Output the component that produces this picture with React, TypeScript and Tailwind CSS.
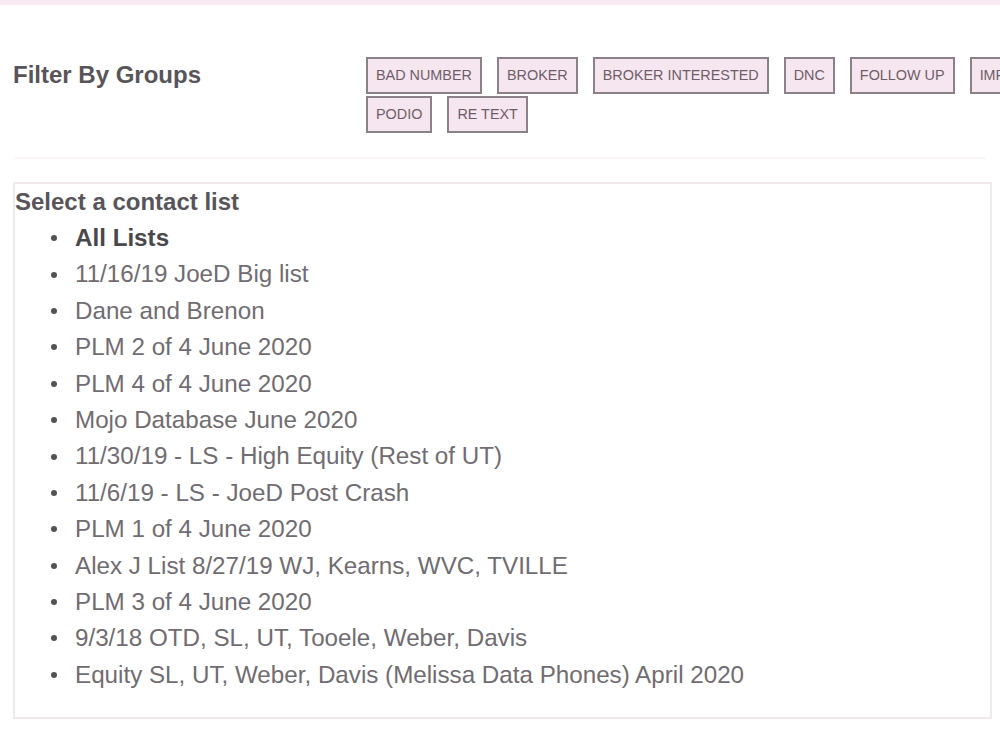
import React from "react";

const groups: string[] = [
  "BAD NUMBER",
  "BROKER",
  "BROKER INTERESTED",
  "DNC",
  "FOLLOW UP",
  "IMPORTANT",
  "PODIO",
  "RE TEXT",
];

const lists: string[] = [
  "11/16/19 JoeD Big list",
  "Dane and Brenon",
  "PLM 2 of 4 June 2020",
  "PLM 4 of 4 June 2020",
  "Mojo Database June 2020",
  "11/30/19 - LS - High Equity (Rest of UT)",
  "11/6/19 - LS - JoeD Post Crash",
  "PLM 1 of 4 June 2020",
  "Alex J List 8/27/19 WJ, Kearns, WVC, TVILLE",
  "PLM 3 of 4 June 2020",
  "9/3/18 OTD, SL, UT, Tooele, Weber, Davis",
  "Equity SL, UT, Weber, Davis (Melissa Data Phones) April 2020",
];

function ListRow({ label, bold }: { label: string; bold?: boolean }) {
  return (
    <li className="flex items-center h-[36.4px]">
      <span className="ml-[36px] w-[6px] h-[6px] rounded-full bg-[#555055]"></span>
      <span
        className={
          bold
            ? "ml-[18px] font-bold text-[#4a474b] whitespace-nowrap"
            : "ml-[18px] text-[#716c72] whitespace-nowrap"
        }
      >
        {label}
      </span>
    </li>
  );
}

export default function App() {
  return (
    <div
      className="w-[1000px] h-[750px] overflow-hidden bg-white"
      style={{ fontFamily: '"Liberation Sans", Arial, sans-serif' }}
    >
      <div className="h-[5px] bg-[#f8ebf3]"></div>

      <div className="flex pt-[52px] pb-[24px] mx-[15px] border-b-2 border-[#fbf3f8]">
        <div className="w-[353px] shrink-0 h-[35px] flex items-center -ml-[2px]">
          <h2 className="text-[24px] font-bold text-[#58545a] leading-none">Filter By Groups</h2>
        </div>
        <div className="w-[740px] shrink-0 flex flex-wrap gap-x-[15px] gap-y-[2px]">
          {groups.map((g) => (
            <button
              key={g}
              className="h-[37px] px-2 border-2 border-[#8d8189] bg-[#f6e6ef] text-[14.4px] text-[#6e5d69] whitespace-nowrap"
            >
              {g}
            </button>
          ))}
        </div>
      </div>

      <div className="ml-[13px] mt-[23px] w-[979px] h-[537px] border-2 border-[#f1e8ee]">
        <h3 className="text-[24px] font-bold text-[#58545a] leading-[35px]">Select a contact list</h3>
        <ul className="text-[24.2px] mt-[1px]">
          <ListRow label="All Lists" bold />
          {lists.map((l) => (
            <ListRow key={l} label={l} />
          ))}
        </ul>
      </div>
    </div>
  );
}
